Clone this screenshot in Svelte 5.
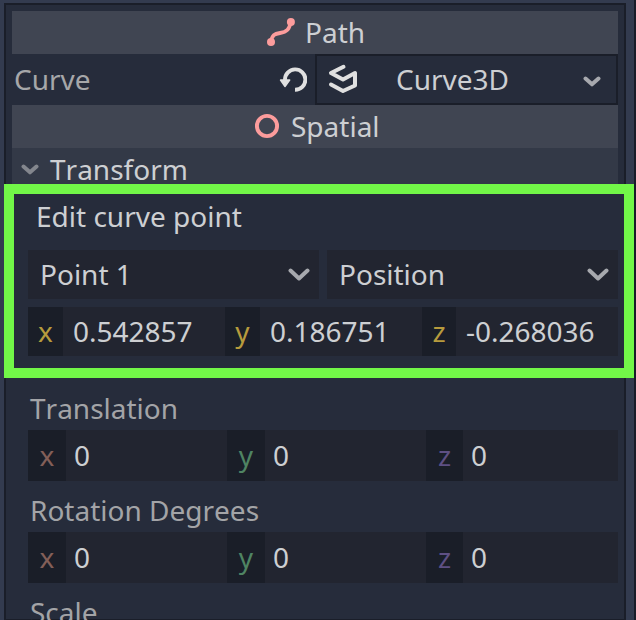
<script>
  const point = [
    { axis: 'x', value: '0.542857' },
    { axis: 'y', value: '0.186751' },
    { axis: 'z', value: '-0.268036' }
  ];
  const groups = ['Translation', 'Rotation Degrees'];
  const axes = ['x', 'y', 'z'];
  const selects = ['Point 1', 'Position'];
</script>

<div class="dock">
  <div class="panel">
    <header class="category path">
      <svg width="30" height="30" viewBox="0 0 30 30">
        <path d="M6 25C7 18 9.500 16.700 15 16C22 15 24.500 12 25.700 5" fill="none" stroke="#fc9c9c" stroke-width="3.800" />
        <circle cx="6" cy="25" r="4" fill="#fc9c9c" />
        <circle cx="25.900" cy="5" r="4" fill="#fc9c9c" />
      </svg>
      <span>Path</span>
    </header>

    <div class="property">
      <span class="name">Curve</span>
      <svg class="revert" width="28" height="28" viewBox="0 0 28 28">
        <path d="M6 14A10.200 10.200 0 1 1 16 23.800" fill="none" stroke="#e0e0e0" stroke-width="3.900" />
        <path d="M1.500 14H10.700L6 20.500Z" fill="#e0e0e0" stroke="#e0e0e0" stroke-width="1.400" stroke-linejoin="round" />
      </svg>
      <div class="resource">
        <svg width="30" height="30" viewBox="0 0 30 30">
          <path d="M15.500 2.800L3 9L15 15.500L27 9V21.500L15 27L3 20.500" fill="none" stroke="#e0e0e0" stroke-width="4" stroke-linecap="round" stroke-linejoin="round" />
        </svg>
        <span>Curve3D</span>
        <svg class="small" width="18" height="12" viewBox="0 0 18 12">
          <path d="M2.500 2.500L9 8.300L15.500 2.500" />
        </svg>
      </div>
    </div>

    <header class="category spatial">
      <svg width="26" height="26" viewBox="0 0 26 26">
        <circle cx="13" cy="13" r="10.100" fill="none" stroke="#fc9c9c" stroke-width="3.900" />
      </svg>
      <span>Spatial</span>
    </header>

    <div class="section">
      <svg class="small" width="18" height="12" viewBox="0 0 18 12">
        <path d="M2.500 2.500L9 8.300L15.500 2.500" />
      </svg>
      <span>Transform</span>
    </div>

    <section class="highlight">
      <h2>Edit curve point</h2>
      <div class="selects">
        {#each selects as label}
          <div class="select">
            <span>{label}</span>
            <svg width="22" height="14" viewBox="0 0 22 14">
              <path d="M2.500 2.500L11 10.500L19.500 2.500" />
            </svg>
          </div>
        {/each}
      </div>
      <div class="vector">
        {#each point as { axis, value }}
          <div class="cell"><b class={axis}>{axis}</b><span>{value}</span></div>
        {/each}
      </div>
    </section>

    {#each groups as name}
      <div class="group">
        <div class="label">{name}</div>
        <div class="vector">
          {#each axes as axis}
            <div class="cell"><b class={axis}>{axis}</b><span>0</span></div>
          {/each}
        </div>
      </div>
    {/each}
    <div class="group"><div class="label">Scale</div></div>
  </div>
</div>

<style>
  :global(body) { margin: 0; overflow: hidden; }
  .dock {
    box-sizing: border-box;
    width: 636px;
    height: 620px;
    padding: 3px 8px 0 4px;
    border-right: 2px solid #181c28;
    background: #333b4f;
    overflow: hidden;
    font: 28px/43px "Noto Sans", sans-serif;
    font-kerning: none;
    color: #cdcfd2;
    white-space: nowrap;
  }
  .panel {
    box-sizing: border-box;
    height: 617px;
    padding: 6px;
    border: 2px solid #1a1e29;
    border-bottom-width: 1px;
    background: #262c3b;
  }
  svg { display: block; flex: none; }
  .small path, .select path {
    fill: none;
    stroke: #a7a9ae;
    stroke-width: 4;
    stroke-linecap: round;
    stroke-linejoin: round;
  }
  .category {
    display: flex;
    align-items: center;
    height: 43px;
    background: #404552;
  }
  .path { padding-left: 253px; }
  .path svg { margin-top: -1px; }
  .path span { margin-left: 10px; }
  .spatial { padding-left: 242px; }
  .spatial svg { margin-top: -2px; }
  .spatial span { margin-left: 11px; }
  .property {
    display: flex;
    align-items: center;
    height: 51px;
  }
  .name { width: 265px; padding-left: 2px; color: #a6a7a9; }
  .resource {
    box-sizing: border-box;
    display: flex;
    align-items: center;
    width: 303px;
    height: 51px;
    margin-left: auto;
    padding: 0 15px 0 11px;
    border: 2px solid #1a1e29;
  }
  .resource svg { margin-top: -1px; }
  .resource span { margin-left: 38px; }
  .resource .small { margin: 4px 0 0 auto; }
  .section {
    display: flex;
    align-items: center;
    height: 43px;
    padding-left: 9px;
    background: #333947;
  }
  .section .small { margin-top: 1px; }
  .section .small path { stroke: #83868d; }
  .section span { margin-left: 11px; }
  .highlight {
    position: relative;
    box-sizing: border-box;
    height: 194px;
    margin: -7px -16px 0 -8px;
    padding: 1px 6px 0 14px;
    border: 10px solid #72f748;
    background: #262c3b;
  }
  h2 { margin: 0 0 12px 8px; font: inherit; font-kerning: none; }
  .selects {
    display: grid;
    grid-template-columns: 1fr 1fr;
    gap: 8px;
    margin-bottom: 8px;
  }
  .select {
    display: flex;
    align-items: center;
    justify-content: space-between;
    height: 49px;
    padding: 0 9px 0 12px;
    background: #222530;
  }
  .vector {
    display: grid;
    grid-template-columns: 199px 199px 192px;
    height: 51px;
    background: #222530;
  }
  .cell { display: flex; align-items: center; }
  b {
    display: flex;
    align-items: center;
    justify-content: center;
    width: 38px;
    height: 100%;
    background: #1a1e28;
    font-weight: 400;
  }
  b.x { color: #835f58; }
  b.y { color: #4f8463; }
  b.z { width: 37px; color: #5e5084; }
  .cell span { margin-left: 8px; }
  .highlight .vector { grid-template-columns: 197px 197px 196px; height: 49px; }
  .highlight b { width: 35px; color: #b79b3d; }
  .highlight b.z { width: 34px; }
  .highlight .cell span { margin-left: 10px; }
  .group { padding: 8px 0 0 16px; }
  .group + .group { padding-top: 7px; }
  .label { height: 44px; padding-left: 2px; line-height: 44px; color: #a3a4a7; }
</style>
